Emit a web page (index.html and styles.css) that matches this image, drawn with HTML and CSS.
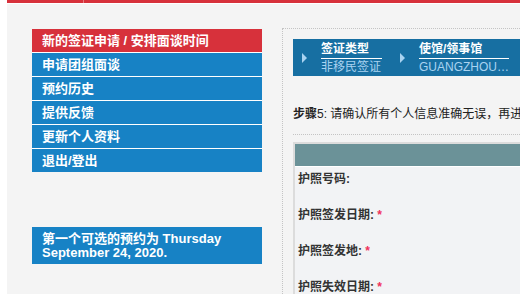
FILE: index.html
```html
<!DOCTYPE html>
<html lang="zh-CN">
<head>
    <meta charset="UTF-8">
    <meta name="viewport" content="width=device-width, initial-scale=1.0">
    <title>签证预约</title>
    <link rel="stylesheet" href="styles.css">
</head>
<body>
    <div class="topbar"><span class="topbar-left"></span></div>

    <div class="page">
        <aside class="sidebar">
            <ul class="nav">
                <li class="nav-item active">新的签证申请 / 安排面谈时间</li>
                <li class="nav-item">申请团组面谈</li>
                <li class="nav-item">预约历史</li>
                <li class="nav-item">提供反馈</li>
                <li class="nav-item">更新个人资料</li>
                <li class="nav-item">退出/登出</li>
            </ul>
            <div class="notice">第一个可选的预约为 Thursday September 24, 2020.</div>
        </aside>

        <main class="content">
            <div class="crumbs">
                <div class="crumb">
                    <span class="crumb-arrow"></span>
                    <div class="crumb-text crumb-short">
                        <div class="crumb-title">签证类型</div>
                        <div class="crumb-value">非移民签证</div>
                    </div>
                </div>
                <div class="crumb crumb-next">
                    <span class="crumb-arrow"></span>
                    <div class="crumb-text crumb-long">
                        <div class="crumb-title">使馆/领事馆</div>
                        <div class="crumb-value">GUANGZHOU CONSULATE</div>
                    </div>
                </div>
            </div>

            <p class="step"><b>步骤</b>5: 请确认所有个人信息准确无误，再进行下一步。</p>
            <div class="rule"></div>

            <table class="form-table">
                <tr><th></th></tr>
                <tr><td>护照号码:</td></tr>
                <tr><td>护照签发日期: <span class="req">*</span></td></tr>
                <tr><td>护照签发地: <span class="req">*</span></td></tr>
                <tr><td>护照失效日期: <span class="req">*</span></td></tr>
            </table>
        </main>
    </div>
</body>
</html>
```

FILE: styles.css
```css
html, body {
    margin: 0;
    overflow: hidden;
}

body {
    background: #fff;
    font-family: "Liberation Sans", "Noto Sans CJK SC", sans-serif;
    font-size: 13px;
    color: #222;
}

.topbar {
    margin-left: 7px;
    height: 3px;
    background: #d7313b;
    border-bottom: 1px solid #fff;
}

.topbar-left {
    display: block;
    width: 76px;
    height: 3px;
    border-right: 1px solid #e77a80;
}

.page {
    display: flex;
    gap: 20px;
    width: 1000px;
    min-height: 300px;
    margin-left: 7px;
    padding: 24px 0 0 25px;
    background: #f4f4f4;
}

/* left column */
.sidebar {
    width: 230px;
    flex-shrink: 0;
    margin-top: 1px;
}

.nav {
    display: flex;
    flex-direction: column;
    gap: 1px;
    margin: 0;
    padding: 0;
    list-style: none;
    background: #fff;
}

.nav-item {
    height: 23px;
    line-height: 23px;
    padding-left: 10px;
    background: #1782c5;
    color: #fff;
    font-weight: bold;
}

.nav-item.active {
    background: #d7313b;
}

.notice {
    margin-top: 55px;
    padding: 5px 20px 4px 10px;
    line-height: 14px;
    background: #1782c5;
    color: #fff;
    font-weight: bold;
}

/* right column */
.content {
    flex: 1;
    border-top: 1px dotted #c4c4c4;
    border-left: 1px dotted #c4c4c4;
    padding: 10px 0 0 10px;
}

.crumbs {
    display: flex;
    height: 37px;
    background: #176fa2;
}

.crumb {
    display: flex;
    align-items: center;
    padding-left: 9px;
}

.crumb-next {
    padding-left: 18px;
}

.crumb-arrow {
    width: 0;
    height: 0;
    margin-right: 14px;
    border-left: 5px solid #a9d3f1;
    border-top: 5px solid transparent;
    border-bottom: 5px solid transparent;
}

.crumb-text {
    align-self: flex-start;
    padding-top: 2px;
    font-size: 12px;
}

.crumb-short {
    width: 61px;
}

.crumb-long {
    width: 90px;
}

.crumb-title {
    line-height: 17px;
    border-bottom: 1px solid #fff;
    color: #fff;
    font-weight: bold;
}

.crumb-value {
    line-height: 17px;
    color: #a9d3f1;
    white-space: nowrap;
    overflow: hidden;
    text-overflow: ellipsis;
}

.step {
    margin: 29px 0 0;
    font-size: 12px;
    line-height: 18px;
    white-space: nowrap;
}

.rule {
    margin-top: 11px;
    border-top: 1px dotted #c4c4c4;
}

.form-table {
    width: 100%;
    margin-top: 7px;
    border: 2px solid #dcdcdc;
    border-right: 0;
    border-spacing: 0;
    background: #f2f3f5;
}

.form-table th {
    height: 22px;
    padding: 0;
    background: #6b9298;
    border-bottom: 1px solid #fff;
}

.form-table td {
    padding: 5px 3px 17px;
    font-size: 12px;
    line-height: 14px;
    font-weight: bold;
    color: #333;
}

.req {
    color: #f0305a;
}
```
